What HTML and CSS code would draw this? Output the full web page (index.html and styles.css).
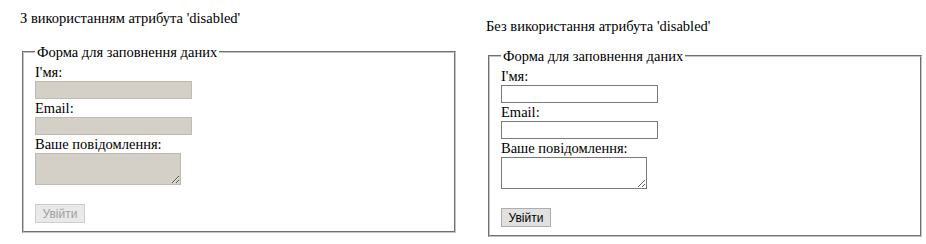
FILE: index.html
```html
<!DOCTYPE html>
<html lang="uk">
<head>
  <meta charset="UTF-8">
  <title>Атрибут disabled</title>
  <link rel="stylesheet" href="styles.css">
</head>
<body>

  <div class="page">

    <section class="column">
      <p class="caption">З використанням атрибута 'disabled'</p>
      <fieldset class="form-box">
        <legend>Форма для заповнення даних</legend>
        <label class="field-label" for="name1">I'мя:</label>
        <input class="field" type="text" id="name1" disabled>
        <label class="field-label" for="email1">Email:</label>
        <input class="field" type="text" id="email1" disabled>
        <label class="field-label" for="msg1">Ваше повідомлення:</label>
        <textarea class="message" id="msg1" disabled></textarea>
        <button class="submit" type="button" disabled>Увійти</button>
      </fieldset>
    </section>

    <section class="column column-right">
      <p class="caption">Без використання атрибута 'disabled'</p>
      <fieldset class="form-box">
        <legend>Форма для заповнення даних</legend>
        <label class="field-label" for="name2">I'мя:</label>
        <input class="field" type="text" id="name2">
        <label class="field-label" for="email2">Email:</label>
        <input class="field" type="text" id="email2">
        <label class="field-label" for="msg2">Ваше повідомлення:</label>
        <textarea class="message" id="msg2"></textarea>
        <button class="submit" type="button">Увійти</button>
      </fieldset>
    </section>

  </div>

</body>
</html>
```

FILE: styles.css
```css
body {
  margin: 0;
  font-family: "Liberation Serif", "Times New Roman", serif;
  font-size: 14.5px;
  color: #000;
  background: #fff;
}

.page {
  display: flex;
  gap: 28px;
  padding: 9px 0 0 20px;
}

.column {
  width: 438px;
  flex-shrink: 0;
}

.column-right {
  margin-top: 8px;
}

.caption {
  margin: 0 0 16px;
  line-height: 18px;
}

.column-right .caption {
  margin-bottom: 12px;
}

.form-box {
  margin: 0 2px;
  padding: 2px 11px 8px;
  border: 2px groove #c4c4c4;
}

.form-box legend {
  padding: 0 2px;
  line-height: 18px;
}

.field-label {
  display: block;
  line-height: 18px;
}

.field {
  display: block;
  box-sizing: border-box;
  width: 157px;
  height: 18px;
  margin: 0;
  padding: 0 2px;
  border: 1px solid #7a7a7a;
  background: #fff;
}

.message {
  display: block;
  box-sizing: border-box;
  width: 146px;
  height: 32px;
  margin: 0;
  padding: 1px 2px;
  border: 1px solid #7a7a7a;
  background: #fff;
}

.field:disabled,
.message:disabled {
  background: #d4d0c8;
  border-color: #bfbbb3;
}

.submit {
  display: block;
  width: 50px;
  height: 19px;
  margin-top: 19px;
  padding: 0;
  font-family: "Liberation Sans", Arial, sans-serif;
  font-size: 12px;
  color: #000;
  background: #e1e1e1;
  border: 1px solid #adadad;
}

.submit:disabled {
  color: #a0a0a0;
  background: #e9e9e9;
  border-color: #cdcdcd;
}
```
